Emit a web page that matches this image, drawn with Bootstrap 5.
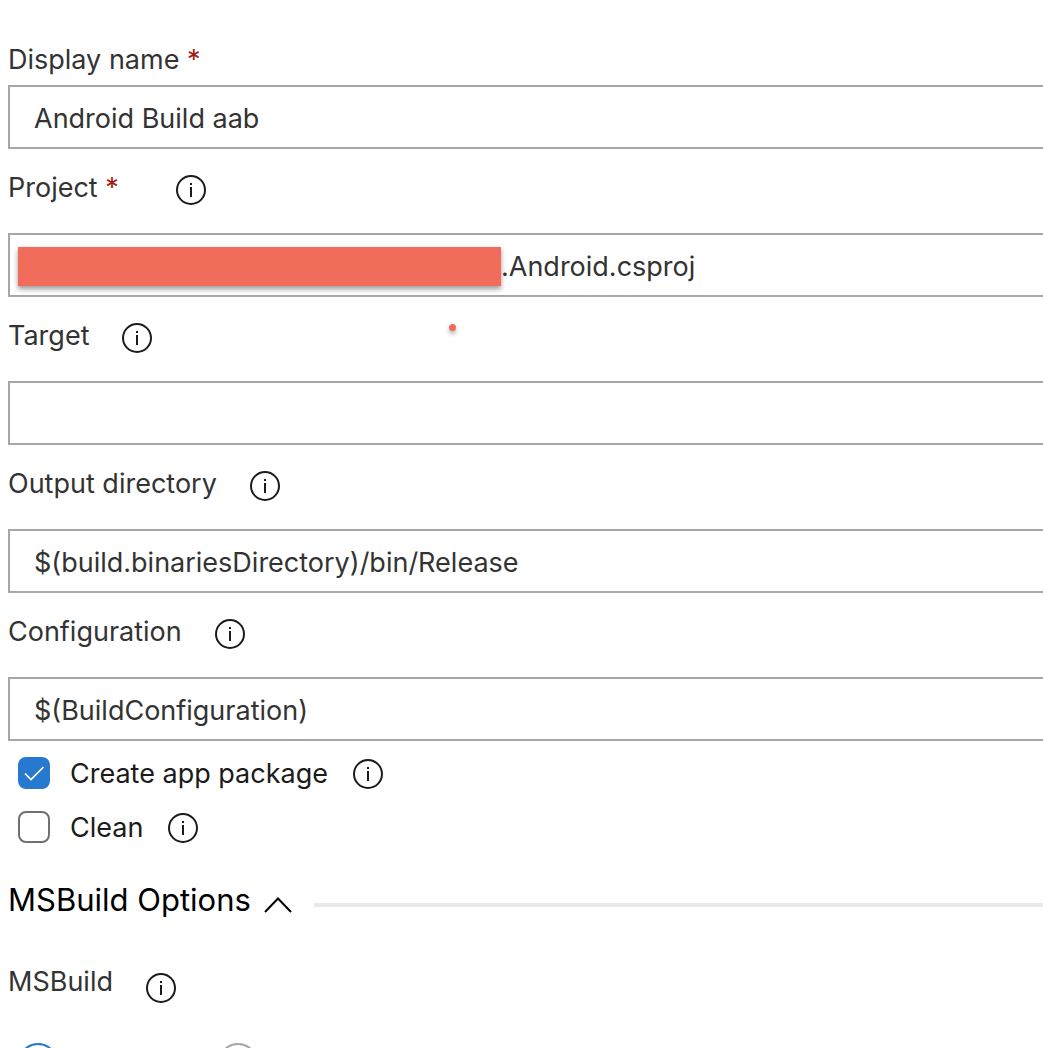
<!DOCTYPE html>
<html lang="en">
<head>
<meta charset="utf-8">
<meta name="viewport" content="width=device-width, initial-scale=1">
<title>Android build task</title>
<link href="https://cdn.jsdelivr.net/npm/bootstrap@5.3.0/dist/css/bootstrap.min.css" rel="stylesheet">
<style>
  body { font-family: Inter, "Liberation Sans", sans-serif; font-size: 27px; line-height: 36px; color: #333; background: #fff; }
  .task-form { padding: 40px 0 0 8px; }
  .field-head { height: 84px; padding-top: 21px; gap: 32px; }
  .first-head { height: 45px; padding-top: 2px; }
  .needed { color: #a11c14; }
  .needed-gap { margin-right: 24px; }
  .field-box { height: 64px; padding: 2px 24px 0 24px; border: 2px solid #a6a6a6; border-right: 0; border-radius: 0; font-size: 27px; line-height: 36px; color: #333; }
  .field-box.masked { padding-left: 491px; }
  .mask-bar { left: 10px; top: 14px; width: 483px; height: 39px; background: #f16c5b; box-shadow: 0 3px 5px rgba(0,0,0,.4); }
  .mask-dot { left: 441px; top: 27px; width: 7px; height: 7px; border-radius: 50%; background: #f16c5b; box-shadow: 0 3px 4px rgba(0,0,0,.3); }
  .info-btn { width: 32px; height: 32px; }
  .field-head .info-btn { margin-top: 4px; }
  .info-btn svg, .fold-btn svg { display: block; }
  .options { padding-top: 6px; }
  .option-row { height: 54px; padding-left: 10px; color: #1b1b1b; }
  .option-row .form-check-input { width: 32px; height: 32px; margin: 0 20px 2px 0; border: 2px solid #707070; border-radius: 8px; }
  .option-row .form-check-input:checked { border-color: #2779cf; background-color: #2779cf; background-size: 32px 32px; background-position: -2px -2px;
    background-image: url("data:image/svg+xml,%3Csvg xmlns='http://www.w3.org/2000/svg' viewBox='0 0 32 32'%3E%3Cpath d='M7 16.5l6 6L25.500 10' fill='none' stroke='%23fff' stroke-width='1.700'/%3E%3C/svg%3E"); }
  .option-row .info-btn { margin-left: 24px; }
  .section-head { height: 60px; margin-top: 15px; color: #000; }
  .fold-btn { font-size: 31px; line-height: 40px; color: #000; gap: 13px; }
  .fold-btn svg { margin-top: 10px; }
  .section-rule { height: 4px; margin: 10px 0 0 22px; background: #e9e9e9; }
  .radio-head { height: 113px; padding-top: 34px; }
  .radio-head .info-btn { margin-top: 8px; }
  .radio-row { padding-left: 10px; gap: 160px; }
  .radio-row .form-check-input { width: 40px; height: 40px; margin: 0; border: 2px solid #a6a6a6; }
  .radio-row .form-check-input:checked { border-color: #2779cf; background-color: #fff; }
</style>
<script src="https://cdn.jsdelivr.net/npm/bootstrap@5.3.0/dist/js/bootstrap.bundle.min.js"></script>
</head>
<body class="vh-100 overflow-hidden">
<svg class="d-none" aria-hidden="true">
  <symbol id="info" viewBox="0 0 32 32">
    <circle cx="16" cy="16" r="14" fill="none" stroke="#1b1b1b" stroke-width="2"/>
    <rect x="15" y="9" width="2" height="2" fill="#1b1b1b"/>
    <rect x="15" y="13" width="2" height="10" fill="#1b1b1b"/>
  </symbol>
</svg>
<form class="task-form">
  <div class="field-head first-head d-flex align-items-start">
    <label for="name">Display name <span class="needed">*</span></label>
  </div>
  <input class="form-control field-box" id="name" type="text" value="Android Build aab">

  <div class="field-head d-flex align-items-start">
    <label for="project" class="needed-gap">Project <span class="needed">*</span></label>
    <button type="button" class="btn p-0 border-0 info-btn" aria-label="About project"><svg width="32" height="32"><use href="#info"/></svg></button>
  </div>
  <div class="position-relative">
    <input class="form-control field-box masked" id="project" type="text" value=".Android.csproj">
    <span class="mask-bar position-absolute"></span>
  </div>

  <div class="field-head d-flex align-items-start position-relative">
    <label for="target">Target</label>
    <button type="button" class="btn p-0 border-0 info-btn" aria-label="About target"><svg width="32" height="32"><use href="#info"/></svg></button>
    <span class="mask-dot position-absolute"></span>
  </div>
  <input class="form-control field-box" id="target" type="text">

  <div class="field-head d-flex align-items-start">
    <label for="output">Output directory</label>
    <button type="button" class="btn p-0 border-0 info-btn" aria-label="About output directory"><svg width="32" height="32"><use href="#info"/></svg></button>
  </div>
  <input class="form-control field-box" id="output" type="text" value="$(build.binariesDirectory)/bin/Release">

  <div class="field-head d-flex align-items-start">
    <label for="config">Configuration</label>
    <button type="button" class="btn p-0 border-0 info-btn" aria-label="About configuration"><svg width="32" height="32"><use href="#info"/></svg></button>
  </div>
  <input class="form-control field-box" id="config" type="text" value="$(BuildConfiguration)">

  <div class="options">
    <div class="option-row d-flex align-items-center">
      <input class="form-check-input" type="checkbox" id="package" checked>
      <label for="package">Create app package</label>
      <button type="button" class="btn p-0 border-0 info-btn" aria-label="About app package"><svg width="32" height="32"><use href="#info"/></svg></button>
    </div>
    <div class="option-row d-flex align-items-center">
      <input class="form-check-input" type="checkbox" id="clean">
      <label for="clean">Clean</label>
      <button type="button" class="btn p-0 border-0 info-btn" aria-label="About clean"><svg width="32" height="32"><use href="#info"/></svg></button>
    </div>
  </div>

  <div class="section-head d-flex align-items-center">
    <button type="button" class="btn p-0 border-0 fold-btn d-flex align-items-center" aria-expanded="true">MSBuild Options
      <svg width="28" height="18" viewBox="0 0 28 18" aria-hidden="true"><path d="M1 16L14 2.500L27 16" fill="none" stroke="#000" stroke-width="2"/></svg>
    </button>
    <span class="section-rule flex-grow-1"></span>
  </div>

  <div class="field-head radio-head d-flex align-items-start">
    <span id="tool">MSBuild</span>
    <button type="button" class="btn p-0 border-0 info-btn" aria-label="About MSBuild"><svg width="32" height="32"><use href="#info"/></svg></button>
  </div>
  <div class="radio-row d-flex" role="radiogroup" aria-labelledby="tool">
    <input class="form-check-input" type="radio" name="tool" aria-label="Version" checked>
    <input class="form-check-input" type="radio" name="tool" aria-label="Specify location">
  </div>
</form>
</body>
</html>
